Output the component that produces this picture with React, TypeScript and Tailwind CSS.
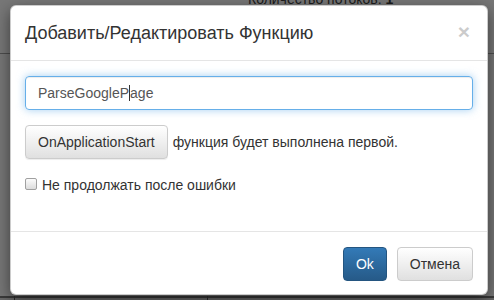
import React from "react";

export default function App() {
  const font = { fontFamily: '"Liberation Sans", Arial, sans-serif' };
  return (
    <div
      className="relative w-[494px] h-[300px] overflow-hidden bg-[#777777] text-[#333333]"
      style={font}
    >
      {/* page behind the overlay */}
      <div className="absolute left-[248px] top-[-11px] text-[14px] leading-[20px] text-[#1c1c1c] whitespace-nowrap">
        Количество потоков: <b>1</b>
      </div>
      <div className="absolute left-0 right-0 top-[53px] h-px bg-[#4d4d4d]" />
      <div className="absolute left-0 right-0 top-[296px] h-[4px] bg-[#6a6a6a] border-t-2 border-[#3a3a3a]" />
      <div className="absolute left-[14px] top-[296px] h-[4px] w-px bg-[#2e2e2e]" />
      <div className="absolute left-[207px] top-[296px] h-[4px] w-px bg-[#2e2e2e]" />

      {/* modal */}
      <div className="absolute left-[10px] top-[5px] w-[478px] flex flex-col bg-white rounded-[6px] border border-[rgba(0,0,0,0.2)] shadow-[0_5px_15px_rgba(0,0,0,0.5)]">
        <div className="h-[55px] px-[14px] pt-[14px] flex justify-between items-start border-b border-[#e5e5e5]">
          <h4 className="text-[18px] leading-[26px] font-normal text-[#333333] m-0">
            Добавить/Редактировать Функцию
          </h4>
          <span className="text-[21px] font-bold leading-none text-[#000000] opacity-20 mt-[1px] mr-[3px]">
            ×
          </span>
        </div>

        <div className="flex flex-col px-[14px] pt-[15px] pb-[36px]">
          <div className="h-[34px] rounded-[4px] border border-[#66afe9] shadow-[inset_0_1px_1px_rgba(0,0,0,0.075),0_0_8px_rgba(102,175,233,0.6)] px-[12px] flex items-center text-[14px] text-[#555555]">
            <span>ParseGoogleP</span>
            <span className="inline-block w-px h-[16px] bg-[#333333]" />
            <span>age</span>
          </div>

          <div className="mt-[15px] h-[34px] flex items-center">
            <div className="h-[34px] px-[12px] flex items-center rounded-[4px] border border-[#cccccc] bg-gradient-to-b from-[#ffffff] to-[#e0e0e0] shadow-[inset_0_1px_0_rgba(255,255,255,0.15),0_1px_1px_rgba(0,0,0,0.075)] text-[14px] text-[#333333]">
              OnApplicationStart
            </div>
            <span className="ml-[5px] text-[14px] text-[#333333]">
              функция будет выполнена первой.
            </span>
          </div>

          <div className="mt-[16px] h-[20px] flex items-center text-[14px] text-[#333333]">
            <span className="inline-block w-[12px] h-[12px] rounded-[2px] border border-[#a0a0a0] bg-gradient-to-b from-[#fcfcfc] to-[#dcdcdc] mt-[-2px]" />
            <span className="ml-[5px]">Не продолжать после ошибки</span>
          </div>
        </div>

        <div className="border-t border-[#e5e5e5] px-[14px] pt-[15px] pb-[13px] flex justify-end gap-[10px]">
          <div className="h-[34px] px-[12px] flex items-center rounded-[4px] border border-[#245580] bg-gradient-to-b from-[#337ab7] to-[#265a88] text-white text-[14px]">
            Ok
          </div>
          <div className="h-[34px] px-[12px] flex items-center rounded-[4px] border border-[#cccccc] bg-gradient-to-b from-[#ffffff] to-[#e0e0e0] text-[#333333] text-[14px]">
            Отмена
          </div>
        </div>
      </div>
    </div>
  );
}
